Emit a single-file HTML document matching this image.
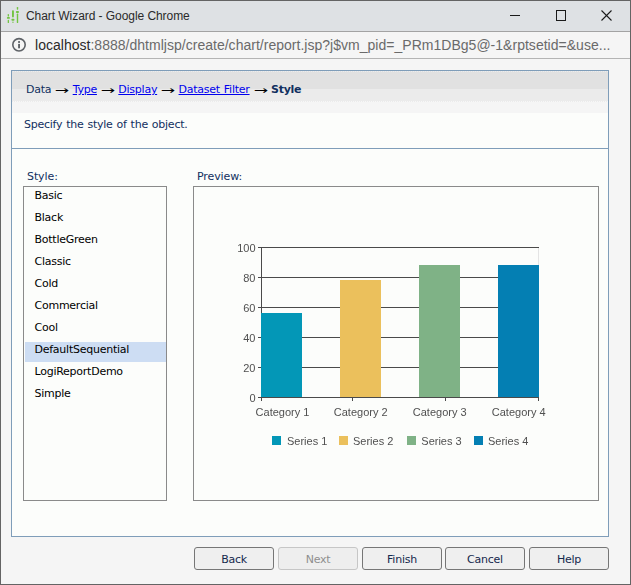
<!DOCTYPE html>
<html>
<head>
<meta charset="utf-8">
<title>Chart Wizard</title>
<style>
html,body{margin:0;padding:0;}
body{width:631px;height:585px;overflow:hidden;background:#f5f5f5;position:relative;font-family:"DejaVu Sans","Liberation Sans",sans-serif;font-size:11px;letter-spacing:-0.25px;word-spacing:0.7px;color:#000;}
.abs{position:absolute;}
#win{left:0;top:0;width:631px;height:585px;box-sizing:border-box;border:1px solid #646464;}
#titlebar{left:1px;top:1px;width:629px;height:30px;background:#dee1e4;}
#title{letter-spacing:-0.06px;word-spacing:0;left:26px;top:8px;font-family:"Liberation Sans",sans-serif;font-size:12px;color:#2a2a2a;white-space:nowrap;line-height:16px;}
#addr{left:1px;top:31px;width:629px;height:26px;background:#f5f5f5;border-top:1px solid #a3a3a3;border-bottom:1px solid #b4b4b4;box-sizing:content-box;}
#url{letter-spacing:0.02px;word-spacing:0;left:35px;top:36px;font-family:"Liberation Sans",sans-serif;font-size:14px;color:#6a6a6a;white-space:nowrap;line-height:18px;}
#url b{font-weight:normal;color:#2a2a2a;}
#panel{left:11px;top:70px;width:598px;height:467px;box-sizing:border-box;border:1px solid #7f9db9;background:#fcfdfb;}
#hdr1{left:12px;top:71px;width:596px;height:18px;background:#e1e1e1;}
#hdr2{left:12px;top:89px;width:596px;height:12px;background:#ebebeb;}
#hdr3{left:12px;top:101px;width:596px;height:12px;background:#f5f5f5;}
#sep{left:12px;top:148px;width:596px;height:1px;background:#7f9db9;}
#crumb{left:26px;top:82px;line-height:16px;white-space:nowrap;font-size:11px;color:#11305f;}
#crumb a{color:#0000ee;text-decoration:underline;}
#crumb b{color:#11305f;}
#desc{left:24px;top:117px;line-height:16px;white-space:nowrap;color:#11305f;}
.ar{display:inline-block;width:13.5px;text-align:center;letter-spacing:0;font-size:11px;line-height:0;vertical-align:baseline;color:#000;transform:translateY(1px) scaleX(1.55);}
.lbl{letter-spacing:-0.1px;color:#11305f;line-height:16px;white-space:nowrap;}
#list{left:23px;top:186px;width:144px;height:315px;box-sizing:border-box;border:1px solid #8a8a8a;background:#fcfdfb;}
#list div{height:22px;line-height:18px;padding-left:10.5px;box-sizing:border-box;white-space:nowrap;}
#list div.sel{background:linear-gradient(#cdddf3,#cdddf3) no-repeat 1px 1px;background-size:141px 20px;}
#prev{left:193px;top:186px;width:406px;height:315px;box-sizing:border-box;border:1px solid #8a8a8a;background:#fcfdfb;}
.btn{top:547px;width:80px;height:23px;box-sizing:border-box;border:1px solid #767676;border-radius:3px;background:#efefef;text-align:center;line-height:23px;font-size:11px;color:#15294d;}
.btn.dis{color:#8e8e8e;border-color:#c6c6c6;background:#eeeeee;}
</style>
</head>
<body>
<div id="win" class="abs"></div>
<div id="titlebar" class="abs"></div>
<svg class="abs" style="left:0px;top:0px" width="32" height="32" viewBox="0 0 32 32">
<g fill="#72c441">
<rect x="7.7" y="14" width="1.3" height="2.6" rx="0.6"/><rect x="6.9" y="16.9" width="3" height="1.9" rx="0.9"/><rect x="7.7" y="19.8" width="1.3" height="3.3" rx="0.6"/>
<rect x="12" y="10.2" width="1.9" height="7.2" rx="0.8"/><rect x="11.4" y="18.8" width="3.1" height="1.9" rx="0.9"/><rect x="12.2" y="21.6" width="1.5" height="1.4" rx="0.5" opacity="0.7"/>
<rect x="16.8" y="6.9" width="1.4" height="2.8" rx="0.6"/><rect x="15.9" y="11" width="3.1" height="1.9" rx="0.9"/><rect x="16.8" y="13.6" width="1.4" height="9.5" rx="0.6"/>
</g>
</svg>
<div id="title" class="abs">Chart Wizard - Google Chrome</div>
<svg class="abs" style="left:380px;top:1px" width="250" height="30" viewBox="0 0 250 30">
<g stroke="#1a1a1a" stroke-width="1" fill="none" shape-rendering="crispEdges">
<line x1="130" y1="14.5" x2="140" y2="14.5"/>
<rect x="176.5" y="9.5" width="9" height="10"/>
</g>
<g stroke="#1a1a1a" stroke-width="1.1" fill="none">
<line x1="221.5" y1="9.5" x2="231.5" y2="19.5"/><line x1="231.5" y1="9.5" x2="221.5" y2="19.5"/>
</g>
</svg>
<div id="addr" class="abs"></div>
<svg class="abs" style="left:11px;top:37px" width="16" height="16" viewBox="0 0 16 16">
<circle cx="8" cy="7.8" r="6.2" fill="none" stroke="#5f6368" stroke-width="1.6"/>
<rect x="7.1" y="6.9" width="1.9" height="4.4" fill="#5f6368"/><rect x="7.1" y="4.1" width="1.9" height="1.8" fill="#5f6368"/>
</svg>
<div id="url" class="abs"><b>localhost</b>:8888/dhtmljsp/create/chart/report.jsp?j$vm_pid=_PRm1DBg5@-1&amp;rptsetid=&amp;use...</div>

<div id="panel" class="abs"></div>
<div id="hdr1" class="abs"></div><div id="hdr2" class="abs"></div><div id="hdr3" class="abs"></div>
<div class="abs" style="left:12px;top:71px;width:596px;height:1px;background:repeating-linear-gradient(90deg,#e1e1e1 0 1px,#ededed 1px 2px)"></div>
<div class="abs" style="left:12px;top:101px;width:596px;height:1px;background:repeating-linear-gradient(90deg,#ebebeb 0 1px,#f7f7f7 1px 2px)"></div>
<div id="sep" class="abs"></div>
<div id="crumb" class="abs">Data <span class="ar">&#x2192;</span> <a>Type</a> <span class="ar">&#x2192;</span> <a>Display</a> <span class="ar">&#x2192;</span> <a>Dataset Filter</a> <span class="ar">&#x2192;</span> <b>Style</b></div>
<div id="desc" class="abs">Specify the style of the object.</div>
<div class="abs lbl" style="left:27px;top:169px">Style:</div>
<div class="abs lbl" style="left:197px;top:169px">Preview:</div>
<div id="list" class="abs">
<div>Basic</div><div>Black</div><div>BottleGreen</div><div>Classic</div><div>Cold</div><div>Commercial</div><div>Cool</div><div class="sel">DefaultSequential</div><div>LogiReportDemo</div><div>Simple</div>
</div>
<div id="prev" class="abs"></div>
<svg class="abs" style="left:194px;top:188px;will-change:transform;letter-spacing:0;word-spacing:0" width="404" height="312" viewBox="194 188 404 312" font-family="'Liberation Sans',sans-serif" font-size="11" fill="#505050">
<g fill="#4a4a4a" shape-rendering="crispEdges">
<rect x="258" y="247" width="281" height="1"/><rect x="258" y="277" width="281" height="1"/><rect x="258" y="307" width="281" height="1"/><rect x="258" y="337" width="281" height="1"/><rect x="258" y="367" width="281" height="1"/>
<rect x="258" y="397" width="281" height="1"/>
<rect x="261" y="247" width="1" height="154"/><rect x="352" y="398" width="1" height="3"/><rect x="445" y="398" width="1" height="3"/><rect x="538" y="398" width="1" height="3"/>
</g>
<rect x="538" y="248" width="1" height="17" fill="#e4e4e4" shape-rendering="crispEdges"/>
<g shape-rendering="crispEdges">
<rect x="261" y="313" width="41" height="84" fill="#0397b7"/>
<rect x="340" y="280" width="41" height="117" fill="#ebc05c"/>
<rect x="419" y="265" width="41" height="132" fill="#7fb286"/>
<rect x="498" y="265" width="41" height="132" fill="#047fb3"/>
</g>
<g text-anchor="end">
<text x="255.5" y="252">100</text><text x="255.5" y="282">80</text><text x="255.5" y="312">60</text><text x="255.5" y="342">40</text><text x="255.5" y="372">20</text><text x="255.5" y="402">0</text>
</g>
<g text-anchor="middle">
<text x="282.5" y="416">Category 1</text><text x="360.7" y="416">Category 2</text><text x="439.7" y="416">Category 3</text><text x="518.7" y="416">Category 4</text>
</g>
<g shape-rendering="crispEdges">
<rect x="272" y="436" width="9" height="9" fill="#0397b7"/><rect x="339" y="436" width="9" height="9" fill="#ebc05c"/><rect x="407" y="436" width="9" height="9" fill="#7fb286"/><rect x="474" y="436" width="9" height="9" fill="#047fb3"/>
</g>
<text x="287" y="445">Series 1</text><text x="353" y="445">Series 2</text><text x="421.3" y="445">Series 3</text><text x="488" y="445">Series 4</text>
</svg>
<div class="abs btn" style="left:194px">Back</div>
<div class="abs btn dis" style="left:278px">Next</div>
<div class="abs btn" style="left:362px">Finish</div>
<div class="abs btn" style="left:445px">Cancel</div>
<div class="abs btn" style="left:529px">Help</div>
</body>
</html>
